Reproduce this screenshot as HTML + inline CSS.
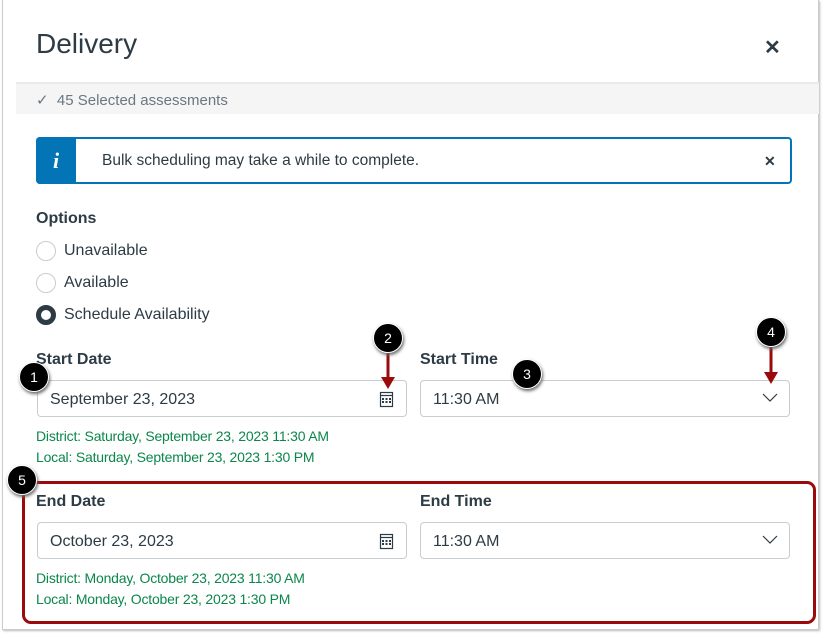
<!DOCTYPE html>
<html><head><style>
body{margin:0;width:824px;height:633px;background:#fff;font-family:"Liberation Sans",sans-serif;color:#2d3b45;position:relative;overflow:hidden}
.a{position:absolute}
.card{left:2px;top:0;width:817px;height:630px;border:1px solid #c7cdd1;border-top:none;box-sizing:border-box;box-shadow:1px 1px 2px #bbb}
.lbl{font-weight:bold;font-size:16px}
.inp{border:1px solid #c7cdd1;border-radius:4px;height:37px;box-sizing:border-box;font-size:16px;line-height:37px;padding-left:12px}
.g{color:#0b874b;font-size:14px;letter-spacing:-0.2px}
.rad{width:18px;height:18px;border:1px solid #c7cdd1;border-radius:50%;left:36px}
.rt{left:64px;font-size:16px}
.m{width:28px;height:28px;border-radius:50%;background:#000;color:#fff;font-size:14px;text-align:center;line-height:28px;box-shadow:1px 2px 3px #666;border:1px solid #fff}
</style></head><body>
<div class="a card"></div>
<div class="a" style="left:36px;top:28px;font-size:28px">Delivery</div>
<div class="a" style="left:764px;top:35px;font-size:20px;font-weight:bold">✕</div>
<div class="a" style="left:16px;top:82px;width:803px;height:30px;background:#f5f5f5;border-top:2px solid #e8eaec"></div>
<div class="a" style="left:36px;top:91px;font-size:15px;color:#6b7780">✓&nbsp; 45 Selected assessments</div>
<div class="a" style="left:36px;top:137px;width:756px;height:47px;border:2px solid #0374b5;border-radius:4px;box-sizing:border-box"></div>
<div class="a" style="left:36px;top:137px;width:40px;height:47px;background:#0374b5;border-radius:4px 0 0 4px;color:#fff;font:italic bold 22px 'Liberation Serif',serif;text-align:center;line-height:47px">i</div>
<div class="a" style="left:102px;top:152px;font-size:15.5px">Bulk scheduling may take a while to complete.</div>
<div class="a" style="left:764px;top:153px;font-size:14px;font-weight:bold">✕</div>
<div class="a lbl" style="left:36px;top:210px">Options</div>
<div class="a rad" style="top:241px"></div><div class="a rt" style="top:242px">Unavailable</div>
<div class="a rad" style="top:273px"></div><div class="a rt" style="top:274px">Available</div>
<div class="a rad" style="top:305px;border:5px solid #2d3b45;width:10px;height:10px"></div><div class="a rt" style="top:306px">Schedule Availability</div>
<div class="a lbl" style="left:36px;top:351px">Start Date</div>
<div class="a lbl" style="left:420px;top:351px">Start Time</div>
<div class="a inp" style="left:37px;top:380px;width:370px">September 23, 2023</div>
<div class="a inp" style="left:420px;top:380px;width:370px">11:30 AM</div>
<div class="a g" style="left:36px;top:428px">District: Saturday, September 23, 2023 11:30 AM</div>
<div class="a g" style="left:36px;top:449px">Local: Saturday, September 23, 2023 1:30 PM</div>
<div class="a" style="left:22px;top:481px;width:794px;height:143px;border:3px solid #9b0a0a;border-radius:9px;box-sizing:border-box"></div>
<div class="a lbl" style="left:36px;top:493px">End Date</div>
<div class="a lbl" style="left:420px;top:493px">End Time</div>
<div class="a inp" style="left:37px;top:522px;width:370px">October 23, 2023</div>
<div class="a inp" style="left:420px;top:522px;width:370px">11:30 AM</div>
<div class="a g" style="left:36px;top:570px">District: Monday, October 23, 2023 11:30 AM</div>
<div class="a g" style="left:36px;top:591px">Local: Monday, October 23, 2023 1:30 PM</div>
<svg class="a" style="left:0;top:0" width="824" height="633">
<g fill="none" stroke="#2d3b45" stroke-width="1.2">
<rect x="380.5" y="392.5" width="12" height="14"/><line x1="380" y1="395.5" x2="393" y2="395.5"/>
<rect x="380.5" y="534.5" width="12" height="14"/><line x1="380" y1="537.5" x2="393" y2="537.5"/>
<path d="M763 394l7 7 7-7"/><path d="M763 536l7 7 7-7"/>
</g>
<g fill="#2d3b45">
<rect x="382" y="398" width="2" height="2"/><rect x="385.5" y="398" width="2" height="2"/><rect x="389" y="398" width="2" height="2"/>
<rect x="382" y="401" width="2" height="2"/><rect x="385.5" y="401" width="2" height="2"/><rect x="389" y="401" width="2" height="2"/>
<rect x="382" y="540" width="2" height="2"/><rect x="385.5" y="540" width="2" height="2"/><rect x="389" y="540" width="2" height="2"/>
<rect x="382" y="543" width="2" height="2"/><rect x="385.5" y="543" width="2" height="2"/><rect x="389" y="543" width="2" height="2"/>
</g>
<g stroke="#9b0a0a" stroke-width="3"><line x1="388" y1="352" x2="388" y2="380"/><line x1="771" y1="346" x2="771" y2="374"/></g>
<g fill="#9b0a0a"><path d="M381 377h14l-7 12z"/><path d="M764 372h14l-7 12z"/></g>
</svg>
<div class="a m" style="left:19px;top:362px">1</div>
<div class="a m" style="left:373px;top:323px">2</div>
<div class="a m" style="left:512px;top:359px">3</div>
<div class="a m" style="left:756px;top:317px">4</div>
<div class="a m" style="left:7px;top:465px">5</div>
</body></html>
